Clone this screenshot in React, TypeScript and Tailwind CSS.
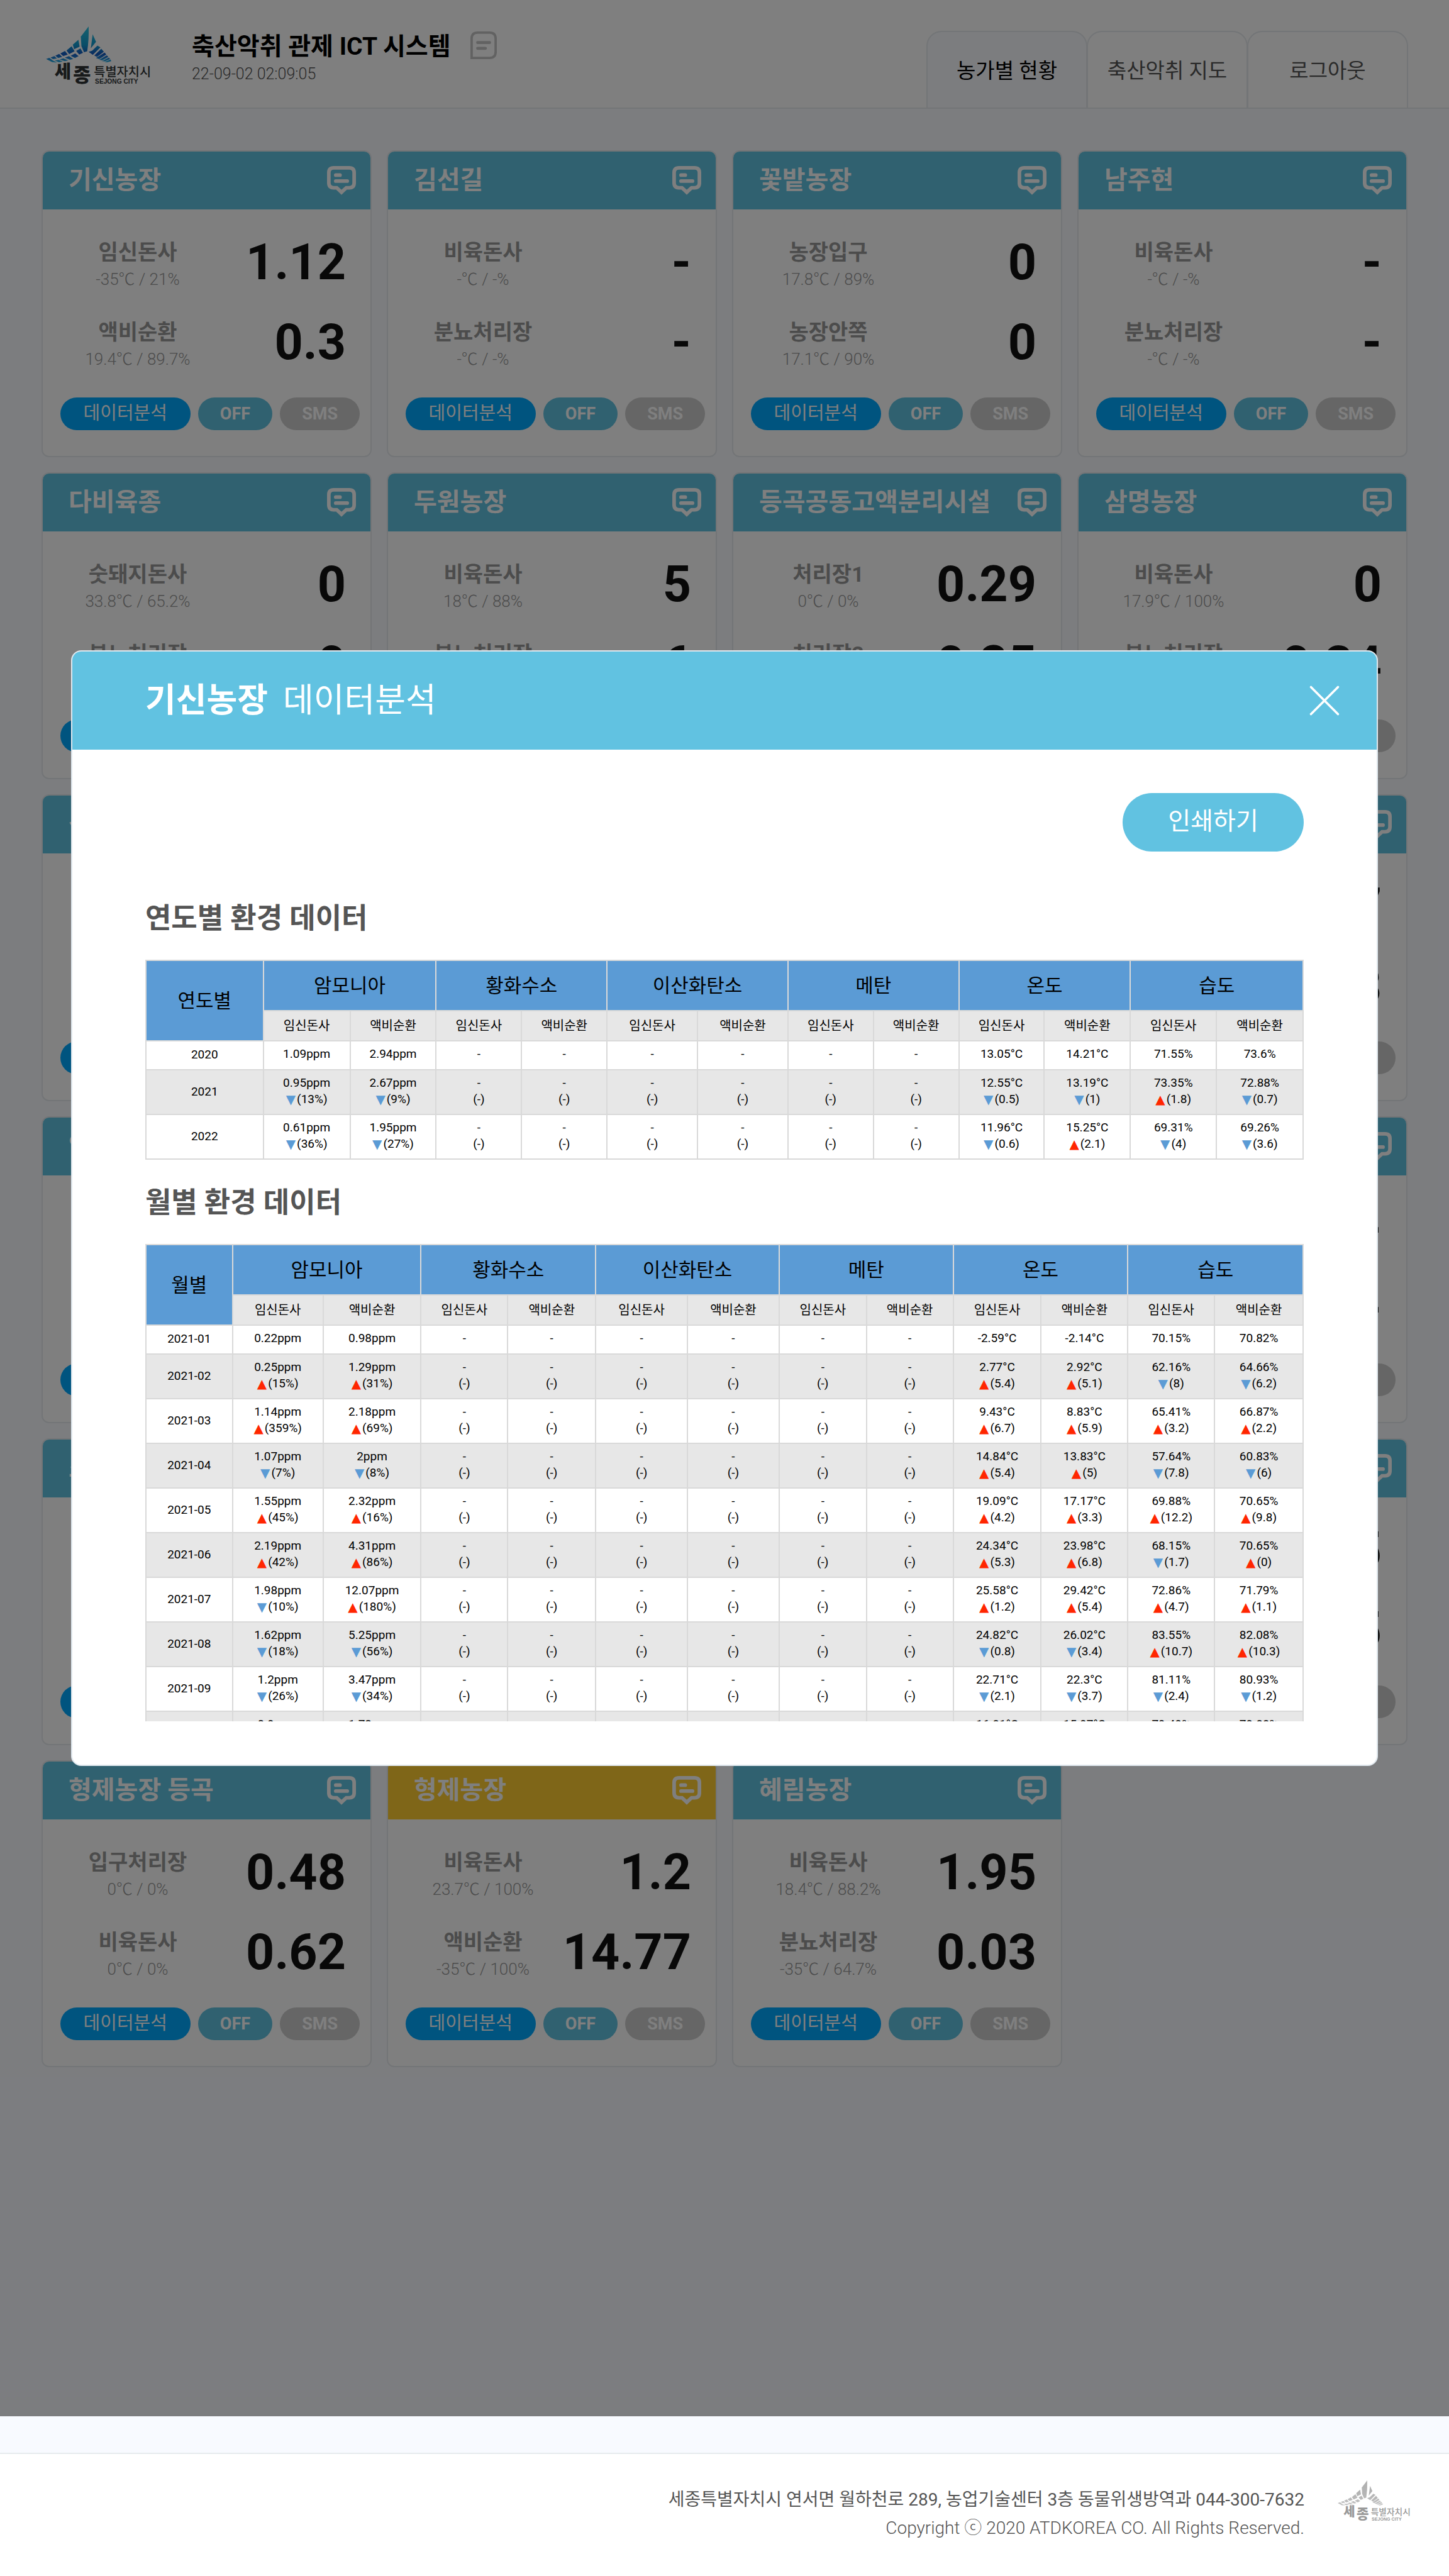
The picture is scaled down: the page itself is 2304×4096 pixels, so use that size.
import React from "react";
import { X } from "lucide-react";

type Reading = { label: string; env: string; value: string };
type Farm = { name: string; alert?: boolean; readings: [Reading, Reading] };

const r = (label: string, env: string, value: string): Reading => ({ label, env, value });

const farms: Farm[] = [
  { name: "기신농장", readings: [r("임신돈사", "-35℃ / 21%", "1.12"), r("액비순환", "19.4℃ / 89.7%", "0.3")] },
  { name: "김선길", readings: [r("비육돈사", "-℃ / -%", "-"), r("분뇨처리장", "-℃ / -%", "-")] },
  { name: "꽃밭농장", readings: [r("농장입구", "17.8℃ / 89%", "0"), r("농장안쪽", "17.1℃ / 90%", "0")] },
  { name: "남주현", readings: [r("비육돈사", "-℃ / -%", "-"), r("분뇨처리장", "-℃ / -%", "-")] },
  { name: "다비육종", readings: [r("숫돼지돈사", "33.8℃ / 65.2%", "0"), r("분뇨처리장", "0℃ / 0%", "0")] },
  { name: "두원농장", readings: [r("비육돈사", "18℃ / 88%", "5"), r("분뇨처리장", "0℃ / 0%", "6")] },
  { name: "등곡공동고액분리시설", readings: [r("처리장1", "0℃ / 0%", "0.29"), r("처리장2", "0℃ / 0%", "0.25")] },
  { name: "삼명농장", readings: [r("비육돈사", "17.9℃ / 100%", "0"), r("분뇨처리장", "0℃ / 0%", "0.34")] },
  { name: "삼성농장", readings: [r("비육돈사", "0℃ / 0%", "0"), r("분뇨처리장", "0℃ / 0%", "0")] },
  { name: "성지농장", readings: [r("비육돈사", "0℃ / 0%", "0"), r("분뇨처리장", "0℃ / 0%", "0")] },
  { name: "송암농장", readings: [r("비육돈사", "0℃ / 0%", "0"), r("분뇨처리장", "0℃ / 0%", "0")] },
  { name: "신흥농장", readings: [r("비육돈사", "0℃ / 0%", "0.7"), r("분뇨처리장", "0℃ / 0%", "0.3")] },
  { name: "양지농장", readings: [r("비육돈사", "0℃ / 0%", "0"), r("분뇨처리장", "0℃ / 0%", "0")] },
  { name: "연동농장", readings: [r("비육돈사", "0℃ / 0%", "0"), r("분뇨처리장", "0℃ / 0%", "0")] },
  { name: "우리농장", readings: [r("비육돈사", "0℃ / 0%", "0"), r("분뇨처리장", "0℃ / 0%", "0")] },
  { name: "전의농장", readings: [r("비육돈사", "-℃ / -%", "-"), r("분뇨처리장", "-℃ / -%", "-")] },
  { name: "조은농장", readings: [r("비육돈사", "0℃ / 0%", "0"), r("분뇨처리장", "0℃ / 0%", "0")] },
  { name: "청송농장", readings: [r("비육돈사", "0℃ / 0%", "0"), r("분뇨처리장", "0℃ / 0%", "0")] },
  { name: "태평농장", readings: [r("비육돈사", "0℃ / 0%", "0"), r("분뇨처리장", "0℃ / 0%", "0")] },
  { name: "하나농장", readings: [r("비육돈사", "0℃ / 0%", "0.5"), r("분뇨처리장", "0℃ / 0%", "0.5")] },
  { name: "형제농장 등곡", readings: [r("입구처리장", "0℃ / 0%", "0.48"), r("비육돈사", "0℃ / 0%", "0.62")] },
  { name: "형제농장", alert: true, readings: [r("비육돈사", "23.7℃ / 100%", "1.2"), r("액비순환", "-35℃ / 100%", "14.77")] },
  { name: "혜림농장", readings: [r("비육돈사", "18.4℃ / 88.2%", "1.95"), r("분뇨처리장", "-35℃ / 64.7%", "0.03")] },
];

const groups = ["암모니아", "황화수소", "이산화탄소", "메탄", "온도", "습도"];

/* A cell is "value" or "value|+change" / "value|-change"; + rises, - falls. */
const D = "-";
const N = "-|";
const none = (c: string) => [c, c, c, c, c, c];

const yearly: string[][] = [
  ["2020", "1.09ppm", "2.94ppm", ...none(D), "13.05°C", "14.21°C", "71.55%", "73.6%"],
  ["2021", "0.95ppm|-13%", "2.67ppm|-9%", ...none(N), "12.55°C|-0.5", "13.19°C|-1", "73.35%|+1.8", "72.88%|-0.7"],
  ["2022", "0.61ppm|-36%", "1.95ppm|-27%", ...none(N), "11.96°C|-0.6", "15.25°C|+2.1", "69.31%|-4", "69.26%|-3.6"],
];

const monthly: string[][] = [
  ["2021-01", "0.22ppm", "0.98ppm", ...none(D), "-2.59°C", "-2.14°C", "70.15%", "70.82%"],
  ["2021-02", "0.25ppm|+15%", "1.29ppm|+31%", ...none(N), "2.77°C|+5.4", "2.92°C|+5.1", "62.16%|-8", "64.66%|-6.2"],
  ["2021-03", "1.14ppm|+359%", "2.18ppm|+69%", ...none(N), "9.43°C|+6.7", "8.83°C|+5.9", "65.41%|+3.2", "66.87%|+2.2"],
  ["2021-04", "1.07ppm|-7%", "2ppm|-8%", ...none(N), "14.84°C|+5.4", "13.83°C|+5", "57.64%|-7.8", "60.83%|-6"],
  ["2021-05", "1.55ppm|+45%", "2.32ppm|+16%", ...none(N), "19.09°C|+4.2", "17.17°C|+3.3", "69.88%|+12.2", "70.65%|+9.8"],
  ["2021-06", "2.19ppm|+42%", "4.31ppm|+86%", ...none(N), "24.34°C|+5.3", "23.98°C|+6.8", "68.15%|-1.7", "70.65%|+0"],
  ["2021-07", "1.98ppm|-10%", "12.07ppm|+180%", ...none(N), "25.58°C|+1.2", "29.42°C|+5.4", "72.86%|+4.7", "71.79%|+1.1"],
  ["2021-08", "1.62ppm|-18%", "5.25ppm|-56%", ...none(N), "24.82°C|-0.8", "26.02°C|-3.4", "83.55%|+10.7", "82.08%|+10.3"],
  ["2021-09", "1.2ppm|-26%", "3.47ppm|-34%", ...none(N), "22.71°C|-2.1", "22.3°C|-3.7", "81.11%|-2.4", "80.93%|-1.2"],
  ["2021-10", "0.9ppm|-25%", "1.72ppm|-50%", ...none(N), "16.81°C|-5.9", "15.97°C|-6.3", "79.49%|-1.6", "79.88%|-1"],
];

const yearlyWidths = [187, 138, 137, 136, 136, 144, 144, 136, 136, 136, 137, 137, 138];
const monthlyWidths = [138, 144, 156, 138, 140, 146, 146, 139, 138, 140, 138, 138, 141];

function Logo({ gray = false, className }: { gray?: boolean; className: string }) {
  const id = gray ? "wing-gray" : "wing-blue";
  return (
    <svg viewBox="28 24 528 298" className={className} overflow="visible" role="img" aria-label="세종특별자치시">
      <defs>
        <linearGradient id={id} x1="0" y1="24" x2="0" y2="206" gradientUnits="userSpaceOnUse">
          <stop offset="0" stopColor={gray ? "#b0b0b0" : "#2cc4e0"} />
          <stop offset="0.5" stopColor={gray ? "#b4b4b4" : "#149cd0"} />
          <stop offset="0.76" stopColor={gray ? "#bababa" : "#1458c0"} />
          <stop offset="1" stopColor={gray ? "#c4c4c4" : "#28b8e8"} />
        </linearGradient>
      </defs>
      <g fill={`url(#${id})`}>
        <path d="M240 24 L201 75 L204 122 L217 153 L233 148 Q242 90 240 24Z" />
        <path d="M189 91 L161 115 L168 138 L195 125Z" />
        <path d="M178 146 L199 134 L212 156 L193 164Z" />
        <path d="M155 123 L130 144 L143 162 L170 148Z" />
        <path d="M150 171 L173 159 L190 172 L172 182Z" />
        <path d="M122 146 L99 159 L113 172 L136 164Z" />
        <path d="M121 180 L142 172 L163 186 L147 190Z" />
        <path d="M93 161 L74 170 L88 182 L108 176Z" />
        <path d="M95 189 L114 183 L138 193 L121 197Z" />
        <path d="M69 172 L50 179 L62 187 L82 184Z" />
        <path d="M71 194 L90 191 L111 199 L92 203Z" />
        <path d="M44 181 L28 186 L58 202 L82 204 L62 194Z" />
        <path d="M260 63 L277 101 L251 133Z" />
        <path d="M284 120 L299 128 L261 166 L240 151 L258 145Z" />
        <path d="M303 135 L316 150 L282 176 L268 169Z" />
        <path d="M320 154 L328 164 L293 187 L277 182Z" />
        <path d="M331 168 L338 176 L307 193 L293 190Z" />
        <path d="M341 179 L347 186 L322 198 L306 197Z" />
        <path d="M349 189 L353 197 L332 203 L320 202Z" />
      </g>
      <g fill={gray ? "#999999" : "#2e3335"}>
        <text x="70" y="280" fontSize="90" fontWeight="900" fontFamily="Noto Sans CJK KR, sans-serif">세</text>
        <text x="163" y="301" fontSize="96" fontWeight="900" fontFamily="Noto Sans CJK KR, sans-serif">종</text>
        <text x="266" y="272" fontSize="62" fontWeight="500" fontFamily="Noto Sans CJK KR, sans-serif">특별자치시</text>
        <text x="272" y="311" fontSize="32" fontWeight="700" fontFamily="Liberation Sans, sans-serif">SEJONG CITY</text>
      </g>
    </svg>
  );
}

function BubbleIcon() {
  return (
    <svg viewBox="0 0 48 48" className="size-[46px]" fill="none" stroke="white" strokeWidth="6" aria-hidden="true">
      <path d="M11 3 H37 Q45 3 45 11 V28 Q45 36 37 36 H32 L24 43.500 L16 36 H11 Q3 36 3 28 V11 Q3 3 11 3Z" />
      <path d="M14.500 15 H21.500 M14.500 25 H33.500" strokeLinecap="round" />
    </svg>
  );
}

function NoteIcon() {
  return (
    <svg viewBox="0 0 44 46" className="h-[44px] w-[42px]" fill="none" stroke="#c4c4c4" strokeWidth="4" aria-hidden="true">
      <path d="M2 44 V12 Q2 2 12 2 H32 Q42 2 42 12 V34 Q42 44 32 44Z" />
      <path d="M12 18.500 H32 M12 28 H25" strokeWidth="5" strokeLinecap="round" />
    </svg>
  );
}

function FarmCard({ farm }: { farm: Farm }) {
  return (
    <article className="overflow-hidden rounded-xl border-2 border-[#e6eaee] bg-white">
      <header className={`flex h-[92px] items-center justify-between pr-[23px] pl-[41px] ${farm.alert ? "bg-[#ffcc30]" : "bg-[#61c2e1]"}`}>
        <h2 className="text-[40px] leading-[56px] font-bold whitespace-nowrap text-white">{farm.name}</h2>
        <button type="button" aria-label={`${farm.name} 메모`}>
          <BubbleIcon />
        </button>
      </header>
      <div className="pt-[21px] pr-[39px] pl-[28px]">
        {farm.readings.map((x) => (
          <div key={x.label} className="flex h-[127px] items-center justify-between">
            <div className="w-[246px] pt-2 text-center whitespace-nowrap text-[#999999]">
              <div className="text-[34px] leading-[44px] font-bold">{x.label}</div>
              <div className="text-[26px] leading-[42px] font-light">{x.env}</div>
            </div>
            <div className="text-[79px] leading-none font-bold text-[#111111]">{x.value}</div>
          </div>
        ))}
      </div>
      <div className="mt-6 flex gap-3 pr-[17px] pb-[41px] pl-[28px]">
        <button type="button" className="h-[52px] w-[207px] rounded-full bg-[#00a8ff] pb-0.5 text-[29px] leading-[50px] text-white">데이터분석</button>
        <button type="button" className="h-[52px] w-[119px] rounded-full bg-[#61c2e1] text-[27px] font-bold text-white">OFF</button>
        <button type="button" className="h-[52px] w-[127px] rounded-full bg-[#cccccc] text-[27px] font-bold text-white">SMS</button>
      </div>
    </article>
  );
}

function Cell({ text }: { text: string }) {
  const [value, change] = text.split("|");
  return (
    <td className="border-2 border-[#d9d9d9] px-0 pt-0 pb-1">
      <div>{value}</div>
      {change === "" && <div>(-)</div>}
      {change && (
        <div className="flex items-center justify-center gap-[2px]">
          <span className={`font-['DejaVu_Sans'] text-[20px] leading-none ${change[0] === "+" ? "text-[#ff2600]" : "text-[#5b9bd5]"}`}>
            {change[0] === "+" ? "▲" : "▼"}
          </span>
          <span>({change.slice(1)})</span>
        </div>
      )}
    </td>
  );
}

function DataTable({ title, unit, widths, rows }: { title: string; unit: string; widths: number[]; rows: string[][] }) {
  const total = widths.reduce((a, b) => a + b, 0);
  return (
    <section>
      <h3 className="text-[45px] leading-[62px] font-bold text-[#555555]">{title}</h3>
      <table aria-label={title} className="mt-[34px] w-full table-fixed border-collapse bg-white text-center text-black">
        <colgroup>
          {widths.map((w, i) => (
            <col key={i} style={{ width: `${(w / total) * 100}%` }} />
          ))}
        </colgroup>
        <thead>
          <tr className="h-[80px] bg-[#5b9bd5] text-[31px] leading-[44px]">
            <th scope="col" rowSpan={2} className="border-2 border-[#d9d9d9] px-0 pt-0.5 pb-0 font-normal">{unit}</th>
            {groups.map((g) => (
              <th key={g} scope="colgroup" colSpan={2} className="border-2 border-[#d9d9d9] px-0 pt-0.5 pb-0 font-normal">{g}</th>
            ))}
          </tr>
          <tr className="h-[48px] bg-[#e7e7e7] text-[20px] leading-[26px]">
            {groups.map((g) => (
              <React.Fragment key={g}>
                <th scope="col" className="border-2 border-[#d9d9d9] p-0 font-normal">임신돈사</th>
                <th scope="col" className="border-2 border-[#d9d9d9] p-0 font-normal">액비순환</th>
              </React.Fragment>
            ))}
          </tr>
        </thead>
        <tbody className="text-[19px] leading-[26px]">
          {rows.map((row, i) => (
            <tr key={row[0]} className={i === 0 ? "h-[46px]" : i % 2 ? "h-[71px] bg-[#e7e7e7]" : "h-[71px]"}>
              <th scope="row" className="border-2 border-[#d9d9d9] px-0 pt-0 pb-0.5 font-normal">{row[0]}</th>
              {row.slice(1).map((c, j) => (
                <Cell key={j} text={c} />
              ))}
            </tr>
          ))}
        </tbody>
      </table>
    </section>
  );
}

const tabs = ["농가별 현황", "축산악취 지도", "로그아웃"];

export default function App() {
  return (
    <div className="flex min-h-screen flex-col bg-[#f8faff] font-['Roboto','Noto_Sans_CJK_KR',sans-serif]">
      <div className="relative flex-1">
        <header className="flex h-[173px] justify-between border-b-2 border-[#e6eaee] bg-white pr-[65px] pl-[73px]">
          <div className="flex">
            <Logo className="mt-[42px] h-[95px] w-[169px]" />
            <div className="ml-[63px] pt-[45px]">
              <div className="flex items-center gap-[31px]">
                <h1 className="text-[39px] leading-[58px] font-bold text-black">축산악취 관제 ICT 시스템</h1>
                <button type="button" aria-label="공지" className="-mt-1">
                  <NoteIcon />
                </button>
              </div>
              <p className="text-[25px] leading-[30px] font-light text-[#555555]">22-09-02 02:09:05</p>
            </div>
          </div>
          <nav className="flex items-end text-[33px]">
            {tabs.map((t, i) => (
              <a
                key={t}
                href="#"
                className={`flex h-[122px] w-[256px] items-center justify-center rounded-t-3xl border-t-2 border-r-2 border-l-2 border-[#e6eaee] pt-1 ${i === 0 ? "bg-[#f8faff] text-black" : "-ml-px bg-white text-[#555555]"}`}
              >
                {t}
              </a>
            ))}
          </nav>
        </header>
        <main className="grid grid-cols-4 gap-6 px-[66px] pt-[66px]">
          {farms.map((f) => (
            <FarmCard key={f.name} farm={f} />
          ))}
        </main>

        <div className="absolute inset-0 flex items-center justify-center bg-black/50">
          <div role="dialog" aria-label="기신농장 데이터분석" className="flex h-[46.15%] w-[90.2%] flex-col overflow-hidden rounded-2xl border-2 border-[#e0e8ee] bg-white">
            <div className="flex h-[156px] shrink-0 items-center justify-between bg-[#61c2e1] pr-10 pl-[116px] text-white">
              <h2 className="flex gap-6 text-[53px] leading-[76px]">
                <strong className="font-bold">기신농장</strong>
                <span className="font-normal">데이터분석</span>
              </h2>
              <button type="button" aria-label="닫기">
                <X className="size-[86px]" strokeWidth={1} />
              </button>
            </div>
            <div className="flex-1 overflow-hidden px-[116px] pt-[69px] pb-[69px]">
              <div className="h-full overflow-hidden">
                <div className="flex justify-end">
                  <button type="button" className="h-[93px] w-[288px] rounded-full bg-[#61c2e1] pb-1 text-[39px] leading-[56px] text-white">인쇄하기</button>
                </div>
                <div className="mt-[76px] flex flex-col gap-[38px]">
                  <DataTable title="연도별 환경 데이터" unit="연도별" widths={yearlyWidths} rows={yearly} />
                  <DataTable title="월별 환경 데이터" unit="월별" widths={monthlyWidths} rows={monthly} />
                </div>
              </div>
            </div>
          </div>
        </div>
      </div>

      <footer className="mt-[58px] flex h-[196px] justify-end gap-[53px] border-t-2 border-[#e6eaee] bg-white pr-[60px]">
        <div className="pt-[50px] text-right text-[28px] text-[#555555]">
          <p className="leading-[46px]">세종특별자치시 연서면 월하천로 289, 농업기술센터 3층 동물위생방역과 044-300-7632</p>
          <p className="leading-[44px] font-light">Copyright ⓒ 2020 ATDKOREA CO. All Rights Reserved.</p>
        </div>
        <Logo gray className="mt-[42px] h-[66px] w-[117px]" />
      </footer>
    </div>
  );
}
